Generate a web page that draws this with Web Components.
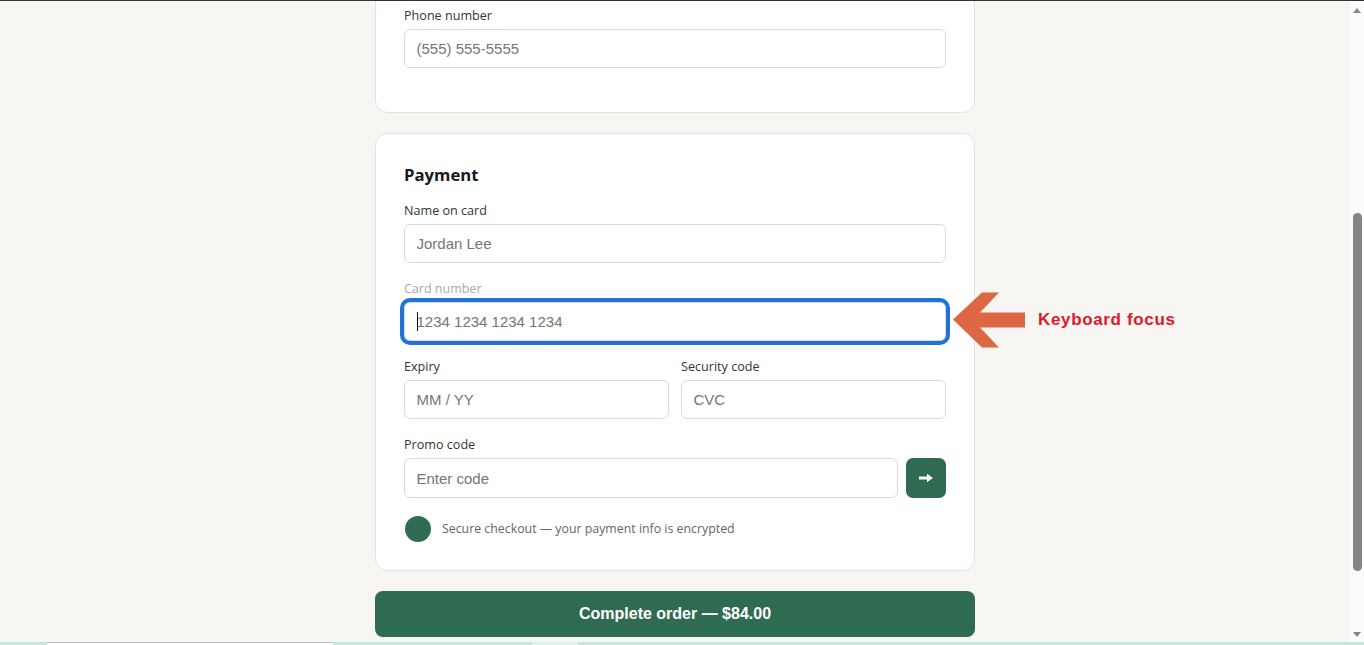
<!DOCTYPE html>
<html lang="en">
<head>
<meta charset="utf-8">
<title>Checkout</title>
<style>
  html, body { margin: 0; height: 100%; overflow: hidden; background: #f7f6f2; }
</style>
</head>
<body>
<template id="checkout-card-tpl">
  <style>
    :host {
      display: block;
      box-sizing: border-box;
      background: #fff;
      border: 1px solid #e5e2da;
      border-radius: 12px;
      padding: 28px;
      margin-bottom: 20px;
    }
    :host(.first) { margin-top: -23px; padding-bottom: 27px; }
    h2 {
      margin: 1px 0 15px;
      font: 700 16.7px/24px "Open Sans", sans-serif;
      color: #1a1a1a;
    }
    h2:empty { display: none; }
  </style>
  <h2></h2>
  <slot></slot>
</template>

<template id="form-field-tpl">
  <style>
    :host {
      display: block;
      margin-bottom: 17px;
      min-width: 0;
    }
    label {
      display: block;
      font: 500 12.6px/17px "Open Sans", sans-serif;
      color: #333;
      margin-bottom: 5px;
    }
    :host([focused]) label { color: #aaa; font-weight: 400; font-size: 12.5px; }
    .box { position: relative; }
    input {
      display: block;
      box-sizing: border-box;
      width: 100%;
      height: 39px;
      padding: 0 11.5px;
      border: 1px solid #dcdad5;
      border-radius: 6px;
      background: #fff;
      font: 15px "Liberation Sans", Arial, sans-serif;
      color: #222;
      outline: none;
    }
    input::placeholder { color: #757575; opacity: 1; }
    :host([focused]) input { outline: 4px solid #1f73d8; outline-offset: 0; }
    .caret {
      display: none;
      position: absolute;
      left: 13px;
      top: 10px;
      width: 1px;
      height: 19px;
      background: #111;
    }
    :host([focused]) .caret { display: block; }
  </style>
  <label></label>
  <div class="box">
    <input type="text">
    <span class="caret"></span>
  </div>
</template>

<template id="promo-row-tpl">
  <style>
    :host {
      display: block;
      margin-bottom: 18px;
    }
    label {
      display: block;
      font: 500 12.6px/17px "Open Sans", sans-serif;
      color: #333;
      margin-bottom: 5px;
    }
    .row { display: flex; gap: 8px; }
    input {
      flex: 1;
      min-width: 0;
      box-sizing: border-box;
      height: 40px;
      padding: 0 11.5px;
      border: 1px solid #dcdad5;
      border-radius: 6px;
      font: 15px "Liberation Sans", Arial, sans-serif;
    }
    input::placeholder { color: #757575; opacity: 1; }
    button {
      width: 40px;
      height: 40px;
      padding: 0;
      border: 0;
      border-radius: 7px;
      background: #2f6b50;
      display: flex;
      align-items: center;
      justify-content: center;
    }
  </style>
  <label>Promo code</label>
  <div class="row">
    <input type="text" placeholder="Enter code">
    <button type="button" aria-label="Apply">
      <svg width="14" height="10" viewBox="0 0 14 10">
        <path fill="#fff" d="M0 3.4H8V0.8L14 5L8 9.2V6.6H0Z"/>
      </svg>
    </button>
  </div>
</template>

<template id="secure-note-tpl">
  <style>
    :host {
      display: flex;
      align-items: center;
      gap: 11px;
      padding-left: 1px;
      font: 400 12.35px/26px "Open Sans", sans-serif;
      color: #666;
    }
    i {
      width: 26px;
      height: 26px;
      border-radius: 50%;
      background: #2f6b50;
      flex: none;
    }
  </style>
  <i></i>
  <slot></slot>
</template>

<template id="submit-button-tpl">
  <style>
    :host { display: block; }
    button {
      display: block;
      width: 100%;
      height: 46px;
      border: 0;
      border-radius: 8px;
      background: #2f6b50;
      color: #fff;
      font: 700 16px "Liberation Sans", Arial, sans-serif;
    }
  </style>
  <button type="button"><slot></slot></button>
</template>

<template id="focus-note-tpl">
  <style>
    :host {
      position: absolute;
      left: 953px;
      top: 291px;
      display: flex;
      align-items: center;
      gap: 13px;
      font: 700 17px "Liberation Sans", Arial, sans-serif;
      letter-spacing: 0.65px;
      color: #e0182d;
    }
    svg { display: block; }
  </style>
  <svg width="72" height="57" viewBox="0 0 72 57">
    <path fill="#dd6645" d="M0 28.5L29 1.5H46L27 21.5H72V36.5H27L46 56.5H29Z"/>
  </svg>
  <span><slot></slot></span>
</template>

<template id="page-scrollbar-tpl">
  <style>
    :host {
      display: flex;
      flex-direction: column;
      align-items: center;
      width: 14px;
      flex: none;
      background: #fbfbfa;
      box-sizing: border-box;
      padding: 7px 0 5px;
    }
    .up, .down {
      width: 0;
      height: 0;
      border-left: 4.5px solid transparent;
      border-right: 4.5px solid transparent;
      flex: none;
    }
    .up { border-bottom: 5px solid #858585; }
    .down { border-top: 5px solid #858585; }
    .track { flex: 1; width: 100%; padding-top: 200px; padding-bottom: 61px; box-sizing: border-box; display: flex; justify-content: center; }
    .thumb { width: 9px; height: 100%; background: #858585; border-radius: 5px; margin-left: 1px; }
  </style>
  <div class="up"></div>
  <div class="track"><div class="thumb"></div></div>
  <div class="down"></div>
</template>

<template id="task-strip-tpl">
  <style>
    :host {
      display: flex;
      height: 3px;
      background: #c5e6dd;
    }
    .tab {
      width: 286px;
      margin-left: 47px;
      background: #fff;
      border-top: 1px solid #bbb;
      box-sizing: border-box;
    }
    .glow { width: 46px; margin-left: 199px; background: #dcf3ed; }
  </style>
  <div class="tab"></div>
  <div class="glow"></div>
</template>

<template id="checkout-page-tpl">
  <style>
    :host {
      display: grid;
      grid-template-rows: 1px 1fr 3px;
      height: 100vh;
      position: relative;
      overflow: hidden;
      background: #f7f6f2;
    }
    .topline { background: #333; }
    .middle { display: flex; min-height: 0; }
    main {
      flex: 1;
      min-width: 0;
      overflow: hidden;
      display: flex;
      justify-content: center;
    }
    .col { width: 600px; flex: none; }
    .pair {
      display: grid;
      grid-template-columns: 1fr 1fr;
      gap: 12px;
    }
  </style>
  <div class="topline"></div>
  <div class="middle">
    <main>
      <div class="col">
        <checkout-card class="first">
          <form-field label="Phone number" placeholder="(555) 555-5555"></form-field>
        </checkout-card>
        <checkout-card heading="Payment">
          <form-field label="Name on card" placeholder="Jordan Lee"></form-field>
          <form-field label="Card number" placeholder="1234 1234 1234 1234" focused></form-field>
          <div class="pair">
            <form-field label="Expiry" placeholder="MM / YY"></form-field>
            <form-field label="Security code" placeholder="CVC"></form-field>
          </div>
          <promo-row></promo-row>
          <secure-note>Secure checkout — your payment info is encrypted</secure-note>
        </checkout-card>
        <submit-button>Complete order — $84.00</submit-button>
      </div>
    </main>
    <page-scrollbar></page-scrollbar>
  </div>
  <task-strip></task-strip>
  <focus-note>Keyboard focus</focus-note>
</template>

<checkout-page></checkout-page>

<script>
  // stamps a template into an open shadow root
  class Stamped extends HTMLElement {
    constructor() {
      super();
      this.attachShadow({ mode: 'open' });
      const tpl = document.getElementById(this.localName + '-tpl');
      this.shadowRoot.appendChild(tpl.content.cloneNode(true));
    }
  }

  class CheckoutCard extends Stamped {
    connectedCallback() {
      this.shadowRoot.querySelector('h2').textContent = this.getAttribute('heading') || '';
    }
  }

  class FormField extends Stamped {
    connectedCallback() {
      this.shadowRoot.querySelector('label').textContent = this.getAttribute('label');
      this.shadowRoot.querySelector('input').placeholder = this.getAttribute('placeholder');
    }
  }

  customElements.define('checkout-card', CheckoutCard);
  customElements.define('form-field', FormField);
  customElements.define('promo-row', class extends Stamped {});
  customElements.define('secure-note', class extends Stamped {});
  customElements.define('submit-button', class extends Stamped {});
  customElements.define('focus-note', class extends Stamped {});
  customElements.define('page-scrollbar', class extends Stamped {});
  customElements.define('task-strip', class extends Stamped {});
  customElements.define('checkout-page', class extends Stamped {});
</script>
</body>
</html>
